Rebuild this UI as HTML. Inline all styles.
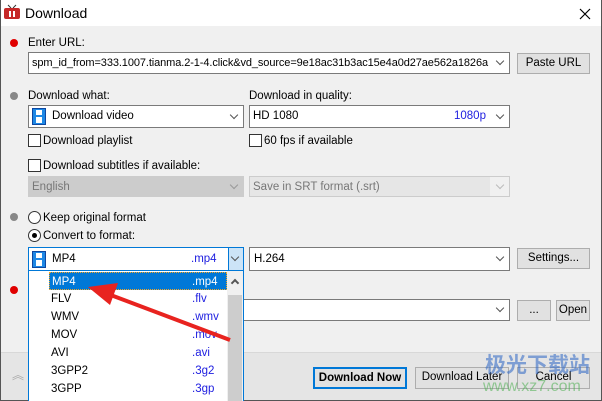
<!DOCTYPE html>
<html><head><style>
*{box-sizing:border-box;margin:0;padding:0}
body{width:602px;height:401px;overflow:hidden;font-family:"Liberation Sans",sans-serif;font-size:11.5px;color:#000;background:#f0f0f0;position:relative}
.a{position:absolute}
.box{position:absolute;background:#fff;border:1px solid #7a7a7a}
.btn{position:absolute;background:#e1e1e1;border:1px solid #adadad;text-align:center;line-height:18px}
.dot{position:absolute;width:8px;height:8px;border-radius:50%}
.chev{position:absolute;width:6px;height:6px;border-right:1px solid #555;border-bottom:1px solid #555;transform:rotate(45deg)}
.cb{position:absolute;width:13px;height:13px;border:1px solid #333;background:#fff}
.rd{position:absolute;width:13px;height:13px;border:1px solid #333;border-radius:50%;background:#fff}
.t{position:absolute;white-space:nowrap;line-height:14px}
.li{position:absolute;left:49px;width:178px;height:18px;line-height:18px}
.li span{position:absolute;left:143px;color:#2020e0}
</style></head><body>
<div class="a" style="left:0;top:0;width:602px;height:26px;background:#fff"></div>
<div class="a" style="left:0;top:0;width:1px;height:401px;background:#555"></div>
<div class="a" style="right:0;top:0;width:1px;height:401px;background:#555"></div>
<div class="a" style="left:0;bottom:0;width:602px;height:1px;background:#555"></div>
<svg class="a" style="left:3px;top:4px" width="18" height="16"><line x1="5" y1="1" x2="8" y2="4" stroke="#333"/><line x1="13" y1="1" x2="10" y2="4" stroke="#333"/><rect x="1" y="4" width="16" height="11" rx="2" fill="#c62828"/><rect x="6" y="7" width="6" height="6" fill="#fff"/><rect x="8" y="6" width="2" height="8" fill="#c62828"/></svg>
<div class="t" style="left:25px;top:5px;font-size:14px;line-height:16px">Download</div>
<svg class="a" style="left:579px;top:8px" width="12" height="12"><path d="M1 1L11 11M11 1L1 11" stroke="#000" stroke-width="1.2"/></svg>

<div class="dot" style="left:10px;top:39px;background:#e00000"></div>
<div class="t" style="left:28px;top:36px">Enter URL:</div>
<div class="box" style="left:28px;top:52px;width:482px;height:22px"></div>
<div class="t" style="left:32px;top:56px;width:458px;overflow:hidden;font-size:11px;letter-spacing:-0.1px">spm_id_from=333.1007.tianma.2-1-4.click&amp;vd_source=9e18ac31b3ac15e4a0d27ae562a1826a</div>
<div class="chev" style="left:497px;top:58px"></div>
<div class="btn" style="left:517px;top:53px;width:73px;height:21px">Paste URL</div>

<div class="dot" style="left:10px;top:92px;background:#888"></div>
<div class="t" style="left:28px;top:89px">Download what:</div>
<div class="t" style="left:249px;top:89px">Download in quality:</div>
<div class="box" style="left:28px;top:105px;width:216px;height:23px"></div>
<svg class="a" style="left:32px;top:108px" width="14" height="17"><rect x="0.5" y="0.5" width="13" height="16" fill="#1e88e5" stroke="#0d47a1"/><rect x="4" y="2" width="6" height="5" fill="#fff"/><rect x="4" y="9" width="6" height="6" fill="#fff"/></svg>
<div class="t" style="left:52px;top:109px">Download video</div>
<div class="chev" style="left:231px;top:112px"></div>
<div class="box" style="left:249px;top:105px;width:261px;height:23px"></div>
<div class="t" style="left:253px;top:109px">HD 1080</div>
<div class="t" style="left:454px;top:109px;color:#2020e0">1080p</div>
<div class="chev" style="left:497px;top:112px"></div>

<div class="cb" style="left:28px;top:134px"></div><div class="t" style="left:43px;top:134px">Download playlist</div>
<div class="cb" style="left:249px;top:134px"></div><div class="t" style="left:264px;top:134px">60 fps if available</div>
<div class="cb" style="left:28px;top:159px"></div><div class="t" style="left:43px;top:159px">Download subtitles if available:</div>
<div class="a" style="left:28px;top:176px;width:216px;height:21px;background:#ccc;border:1px solid #ccc"></div>
<div class="t" style="left:32px;top:180px;color:#777">English</div>
<div class="chev" style="left:231px;top:182px;border-color:#999"></div>
<div class="a" style="left:249px;top:176px;width:261px;height:21px;background:#f0f0f0;border:1px solid #ccc"></div>
<div class="a" style="left:250px;top:177px;width:240px;height:19px;background:#e6e6e6"></div>
<div class="t" style="left:253px;top:180px;color:#777">Save in SRT format (.srt)</div>
<div class="chev" style="left:497px;top:182px;border-color:#bbb"></div>

<div class="dot" style="left:10px;top:213px;background:#888"></div>
<div class="rd" style="left:28px;top:211px"></div><div class="t" style="left:43px;top:211px">Keep original format</div>
<div class="rd" style="left:28px;top:229px"></div><div class="a" style="left:32px;top:233px;width:5px;height:5px;border-radius:50%;background:#000"></div><div class="t" style="left:43px;top:229px">Convert to format:</div>

<div class="a" style="left:28px;top:247px;width:216px;height:24px;background:#fff;border:1px solid #0078d7"></div>
<div class="a" style="left:228px;top:248px;width:15px;height:22px;background:#cce4f7;border-left:1px solid #0078d7"></div>
<svg class="a" style="left:32px;top:251px" width="14" height="17"><rect x="0.5" y="0.5" width="13" height="16" fill="#1e88e5" stroke="#0d47a1"/><rect x="4" y="2" width="6" height="5" fill="#fff"/><rect x="4" y="9" width="6" height="6" fill="#fff"/></svg>
<div class="t" style="left:52px;top:252px">MP4</div>
<div class="t" style="left:191px;top:252px;color:#2020e0">.mp4</div>
<div class="chev" style="left:232px;top:254px"></div>
<div class="box" style="left:249px;top:247px;width:261px;height:24px"></div>
<div class="t" style="left:254px;top:252px">H.264</div>
<div class="chev" style="left:497px;top:254px"></div>
<div class="btn" style="left:517px;top:248px;width:73px;height:21px">Settings...</div>

<div class="dot" style="left:10px;top:286px;background:#e00000"></div>
<div class="box" style="left:200px;top:299px;width:310px;height:22px"></div>
<div class="chev" style="left:497px;top:305px"></div>
<div class="btn" style="left:517px;top:300px;width:34px;height:21px">...</div>
<div class="btn" style="left:556px;top:300px;width:34px;height:21px">Open</div>

<div class="a" style="left:1px;top:352px;width:600px;height:48px;background:#e5e5e5;border-top:1px solid #d8d8d8"></div>
<div class="t" style="left:12px;top:368px;color:#aaa;font-size:12px">︽</div>
<div class="a" style="left:313px;top:367px;width:94px;height:22px;background:#e1e1e1;border:2px solid #0078d7;font-weight:bold;text-align:center;line-height:18px">Download Now</div>
<div class="btn" style="left:415px;top:367px;width:94px;height:22px">Download Later</div>
<div class="btn" style="left:517px;top:367px;width:73px;height:22px">Cancel</div>
<div class="t" style="left:485px;top:352px;font-size:21px;line-height:24px;color:#3a6fc8;opacity:.6;font-family:'Noto Sans CJK SC',sans-serif;font-weight:bold">极光下载站</div>
<div class="t" style="left:483px;top:380px;font-size:16px;color:#4caf50;opacity:.55">www.xz7.com</div>

<div class="a" style="left:28px;top:270px;width:216px;height:131px;background:#fff;border:1px solid #0078d7;border-bottom:none"></div>
<div class="a" style="left:227px;top:271px;width:16px;height:130px;background:#f0f0f0"></div>
<div class="a" style="left:228px;top:295px;width:14px;height:106px;background:#cdcdcd"></div>
<div class="a" style="left:232px;top:280px;width:6px;height:6px;border-left:2px solid #555;border-top:2px solid #555;transform:rotate(45deg)"></div>
<div class="li" style="top:272px;background:#0078d7;color:#fff;border:1px dotted #f5a623;padding-left:2px">MP4<span style="color:#fff;left:142px">.mp4</span></div>
<div class="li" style="top:290px;padding-left:2px">FLV<span>.flv</span></div>
<div class="li" style="top:308px;padding-left:2px">WMV<span>.wmv</span></div>
<div class="li" style="top:326px;padding-left:2px">MOV<span>.mov</span></div>
<div class="li" style="top:344px;padding-left:2px">AVI<span>.avi</span></div>
<div class="li" style="top:362px;padding-left:2px">3GPP2<span>.3g2</span></div>
<div class="li" style="top:380px;padding-left:2px">3GPP<span>.3gp</span></div>

<svg class="a" style="left:0;top:0" width="602" height="401"><line x1="230" y1="340" x2="108" y2="294" stroke="#e8231f" stroke-width="4"/><polygon points="88,287 118,283 110,305" fill="#e8231f"/></svg>
</body></html>
